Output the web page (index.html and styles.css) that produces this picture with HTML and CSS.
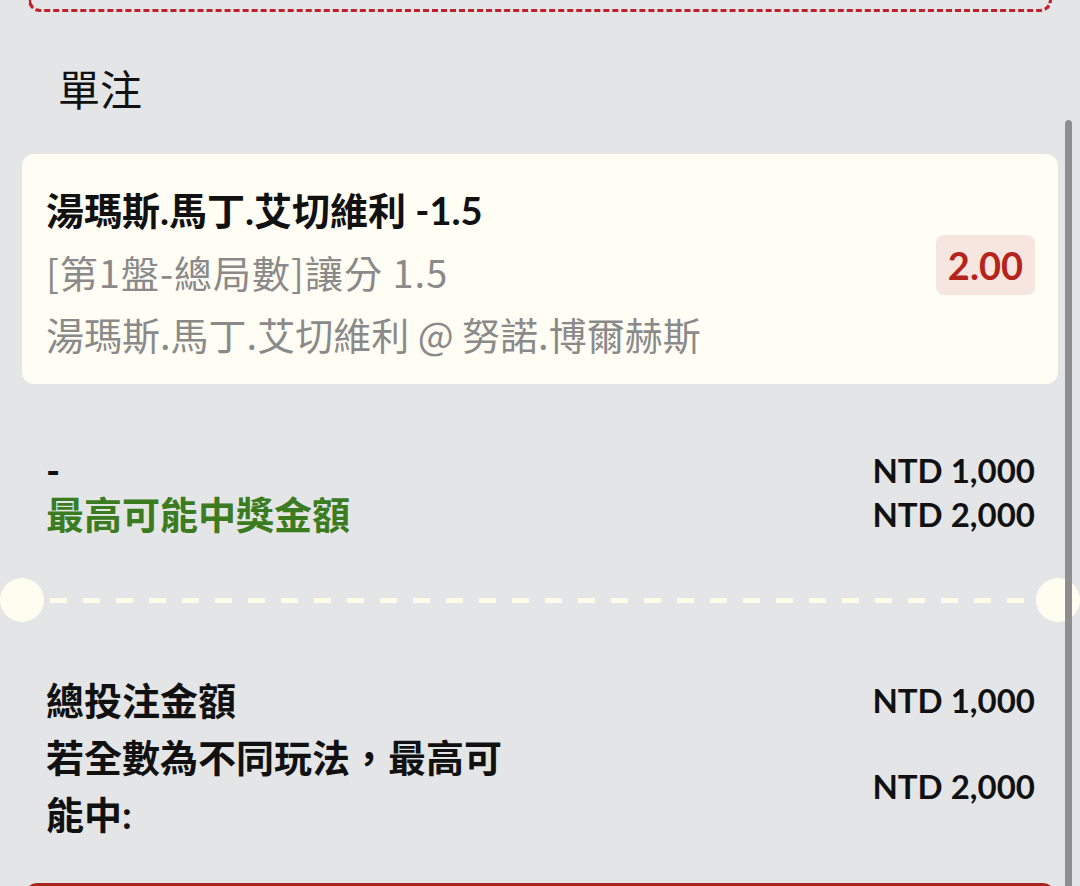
FILE: index.html
```html
<!DOCTYPE html>
<html lang="zh-Hant">
  <head>
    <meta charset="UTF-8" />
    <meta name="viewport" content="width=device-width, initial-scale=1.0" />
    <title>單注</title>
    <link rel="stylesheet" href="styles.css">
  </head>
  <body>
    <div class="slip-edge"></div>

    <h2 class="section-title">單注</h2>

    <div class="bet-card">
      <div class="bet-info">
        <p class="bet-pick">湯瑪斯.馬丁.艾切維利 -1.5</p>
        <p class="bet-market">[第1盤-總局數]讓分 1.5</p>
        <p class="bet-match">湯瑪斯.馬丁.艾切維利 @ 努諾.博爾赫斯</p>
      </div>
      <span class="odds">2.00</span>
    </div>

    <div class="summary single-summary">
      <span class="label">-</span>
      <span class="amount">NTD 1,000</span>
      <span class="label win-label">最高可能中獎金額</span>
      <span class="amount">NTD 2,000</span>
    </div>

    <div class="divider">
      <span class="notch"></span>
      <span class="dash-line"></span>
      <span class="notch"></span>
    </div>

    <div class="summary total-summary">
      <span class="label">總投注金額</span>
      <span class="amount">NTD 1,000</span>
      <span class="label">若全數為不同玩法，最高可能中:</span>
      <span class="amount">NTD 2,000</span>
    </div>

    <div class="place-bar"></div>

    <div class="scroll-thumb"></div>
  </body>
</html>
```

FILE: styles.css
```css
* {
  margin: 0;
  padding: 0;
  box-sizing: border-box;
}

body {
  background: #e4e5e7;
  font-family: Lato, "Noto Sans CJK TC", sans-serif;
  color: #111;
  overflow: hidden;
  height: 886px;
}

.slip-edge {
  height: 12px;
  margin: 0 28px;
  border: 3px dashed #c0202a;
  border-top: none;
  border-radius: 0 0 14px 14px;
}

.section-title {
  font-family: "Noto Sans CJK TC", sans-serif;
  font-size: 42px;
  font-weight: 400;
  line-height: 50px;
  margin: 51px 0 41px 58px;
}

.bet-card {
  margin: 0 22px;
  background: #fffdf4;
  border-radius: 12px;
  padding: 25px 23px 19px 24px;
  display: flex;
  align-items: center;
  justify-content: space-between;
}

.bet-info p {
  font-size: 38px;
  line-height: 62px;
  white-space: nowrap;
}

.bet-pick {
  font-weight: bold;
}

.bet-market, .bet-match {
  font-family: "Noto Sans CJK TC", sans-serif;
  color: #8a8a8a;
}

.bet-market {
  letter-spacing: 1px;
}

.odds {
  background: #f7e6e0;
  color: #b5241c;
  font-size: 38px;
  font-weight: 700;
  line-height: 60px;
  padding: 0 12px;
  border-radius: 8px;
  margin-top: -14px;
}

.summary {
  display: grid;
  grid-template-columns: 470px 1fr;
  align-items: center;
  padding: 0 45px 0 46px;
}

.summary .label {
  font-weight: bold;
  font-size: 38px;
}

.summary .amount {
  text-align: right;
  font-weight: bold;
  font-size: 33px;
}

.single-summary {
  margin-top: 64px;
  line-height: 44px;
}

.win-label {
  color: #3b7c20;
}

.divider {
  display: flex;
  align-items: center;
  margin-top: 42px;
}

.notch {
  width: 44px;
  height: 44px;
  border-radius: 50%;
  background: #fffdf0;
  flex-shrink: 0;
}

.dash-line {
  flex: 1;
  height: 5px;
  margin: 0 6px;
  background: repeating-linear-gradient(90deg, #fffbe9 0 17px, transparent 17px 33px);
}

.total-summary {
  margin-top: 50px;
  line-height: 57px;
}

.place-bar {
  margin: 40px 25px 0;
  height: 40px;
  background: #a82520;
  border-radius: 12px 12px 0 0;
}

.scroll-thumb {
  position: fixed;
  right: 8px;
  top: 120px;
  bottom: 0;
  width: 7px;
  background: #8e8e8e;
  border-radius: 4px 4px 0 0;
}
```
